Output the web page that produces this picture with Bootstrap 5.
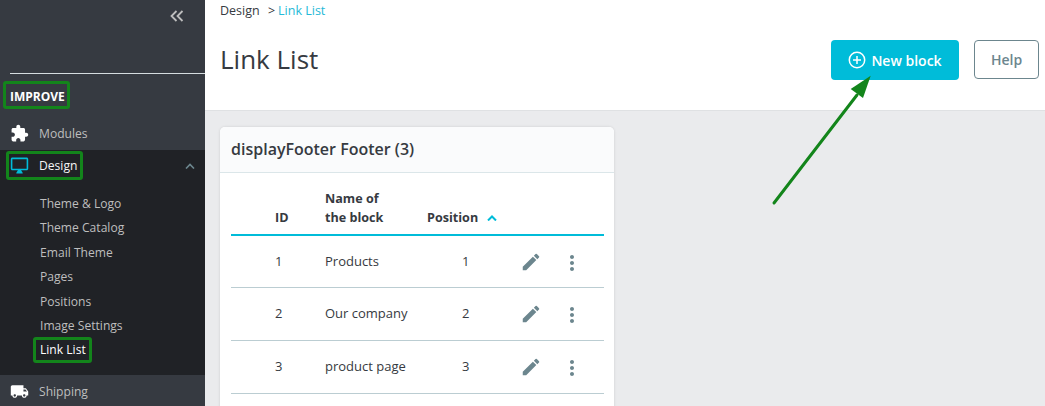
<!DOCTYPE html>
<html lang="en">
<head>
  <meta charset="UTF-8">
  <title>Link List</title>
  <link href="https://cdn.jsdelivr.net/npm/bootstrap@5.3.0/dist/css/bootstrap.min.css" rel="stylesheet">
  <style>
    html, body { height: 406px; overflow: hidden; }
    body { font-family: "Open Sans", sans-serif; font-size: 13px; color: #363a41; background: #eaebed; }
    .page-wrap { height: 406px; overflow: hidden; }

    /* sidebar */
    .side-bar { width: 205px; flex: none; background: #363a41; color: #bebebe; }
    .side-top { height: 74px; padding: 10px 21px 0 0; margin-left: 10px; border-bottom: 1px solid #d5dde0; }
    .side-title { height: 43px; padding: 14px 0 0 10px; color: #fff; font-size: 12px; font-weight: 700; line-height: 18px; }
    .side-item { height: 33px; padding: 2px 0 0 11px; font-size: 12.1px; }
    .side-ico { flex: none; width: 19px; height: 19px; margin: -2px 10px 0 -1px; }
    .side-chev { margin: -2px 10px 0 auto; }
    .side-active { background: #202226; height: 225px; }
    .side-active .side-item { height: 31px; color: #f5f5f5; }
    .side-sub { padding: 11px 0 0 40px; margin: 0; list-style: none; font-size: 12.1px; color: #bebebe; }
    .side-sub li { height: 24.4px; line-height: 24.4px; }
    .side-sub li.now { color: #fff; }
    .mark-green { position: absolute; border: 3px solid #13851b; border-radius: 3px; pointer-events: none; }
    .mark-improve { left: 3px; top: 81px; width: 67px; height: 28px; }
    .mark-design { left: 6px; top: 151px; width: 77px; height: 29px; }
    .mark-link { left: 33px; top: 337px; width: 59px; height: 26px; }

    /* header */
    .head-box { height: 111px; background: #fff; border-bottom: 1px solid #dfe1e3; padding: 0 6px 0 15px; }
    .crumbs { padding-top: 2px; font-size: 12.5px; line-height: 17px; color: #363a41; }
    .crumbs .sep { margin: 0 3px 0 5px; }
    .crumbs .cur { color: #25b9d7; }
    .head-row { margin-top: 21px; height: 40px; }
    .head-title { font-size: 26px; font-weight: 400; line-height: 38px; margin: 0; }
    .btn-new { background: #00bcd9; color: #fff; border: 0; border-radius: 4px; width: 128px; height: 40px; font-size: 14px; font-weight: 600; padding: 0; gap: 5px; }
    .btn-help { background: #fff; color: #6c868e; border: 1px solid #6c868e; border-radius: 4px; width: 65px; height: 39px; margin-left: 15px; font-size: 14px; font-weight: 600; padding: 0; }

    /* card */
    .body-box { padding: 16px 15px; }
    .blk-card { width: 394px; background: #fff; border: 0; border-radius: 5px; box-shadow: 0 0 3px rgba(0,0,0,.12); }
    .blk-head { height: 46px; padding: 0 11px; background: #fafbfc; border-bottom: 1px solid #dbe6e9; font-size: 16px; font-weight: 600; line-height: 44px; border-radius: 5px 5px 0 0; }
    .blk-body { padding: 0 10px 40px 11px; }
    .blk-table { width: 373px; table-layout: fixed; margin: 0; font-size: 13px; color: #363a41; }
    .blk-table th { padding: 0 0 7px; vertical-align: bottom; font-weight: 700; font-size: 12.6px; line-height: 19px; border-bottom: 2px solid #00bcd9; height: 62px; background: transparent; }
    .blk-table td { height: 52.7px; padding: 0; vertical-align: middle; border-bottom: 1px solid #bbcdd2; background: transparent; color: #363a41; }
    .col-id { padding-left: 44px !important; }
    .val-id { padding-left: 44px !important; }
    .val-pos { padding-left: 35px !important; }
    .sort-mark { margin-left: 9px; vertical-align: 1px; }
    .act-ico { display: block; fill: #6c868e; }
    .act-dots { margin-top: 2px; }

    .arrow-over { position: absolute; left: 770px; top: 70px; pointer-events: none; }
  </style>
</head>
<body>
  <div class="page-wrap d-flex position-relative">
    <div class="side-bar">
      <div class="side-top d-flex justify-content-end">
        <svg width="14" height="12" viewBox="0 0 14 12" fill="none" stroke="#bebebe" stroke-width="1.8"><polyline points="6.5,1 1.5,6 6.5,11"/><polyline points="12.5,1 7.5,6 12.5,11"/></svg>
      </div>
      <div class="side-title">IMPROVE</div>
      <div class="side-item d-flex align-items-center">
        <svg class="side-ico" viewBox="0 0 24 24" fill="#fff"><path d="M20.5 11H19V7c0-1.1-.9-2-2-2h-4V3.5C13 2.12 11.88 1 10.5 1S8 2.12 8 3.5V5H4c-1.1 0-1.99.9-1.99 2v3.8H3.5c1.49 0 2.7 1.21 2.7 2.7s-1.21 2.7-2.7 2.7H2V20c0 1.1.9 2 2 2h3.8v-1.5c0-1.49 1.21-2.7 2.7-2.7 1.49 0 2.7 1.21 2.7 2.7V22H17c1.1 0 2-.9 2-2v-4h1.5c1.38 0 2.5-1.12 2.5-2.5S21.88 11 20.5 11z"/></svg>
        <span>Modules</span>
      </div>
      <div class="side-active">
        <div class="side-item d-flex align-items-center">
          <svg class="side-ico" viewBox="0 0 24 24" fill="#00bcd9"><path d="M21 2H3c-1.1 0-2 .9-2 2v12c0 1.1.9 2 2 2h7l-2 3v1h8v-1l-2-3h7c1.1 0 2-.9 2-2V4c0-1.1-.9-2-2-2zm0 14H3V4h18v12z"/></svg>
          <span>Design</span>
          <svg class="side-chev" width="10" height="6" viewBox="0 0 10 6" fill="none" stroke="#6c868e" stroke-width="1.6"><polyline points="1,5.500 5,1.500 9,5.500"/></svg>
        </div>
        <ul class="side-sub">
          <li>Theme &amp; Logo</li>
          <li>Theme Catalog</li>
          <li>Email Theme</li>
          <li>Pages</li>
          <li>Positions</li>
          <li>Image Settings</li>
          <li class="now">Link List</li>
        </ul>
      </div>
      <div class="side-item d-flex align-items-center">
        <svg class="side-ico" viewBox="0 0 24 24" fill="#fff"><path d="M20 8h-3V4H3c-1.1 0-2 .9-2 2v11h2c0 1.66 1.34 3 3 3s3-1.34 3-3h6c0 1.66 1.34 3 3 3s3-1.34 3-3h2v-5l-3-4zM6 18.500c-.83 0-1.500-.67-1.500-1.500s.67-1.500 1.500-1.500 1.500.67 1.500 1.500-.67 1.500-1.500 1.500zm13.500-9l1.960 2.500H17V9.500h2.500zm-1.500 9c-.83 0-1.500-.67-1.500-1.500s.67-1.500 1.500-1.500 1.500.67 1.500 1.500-.67 1.500-1.500 1.500z"/></svg>
        <span>Shipping</span>
      </div>
    </div>

    <div class="flex-grow-1">
      <div class="head-box">
        <div class="crumbs">Design <span class="sep">&gt;</span><span class="cur">Link List</span></div>
        <div class="head-row d-flex align-items-start justify-content-between">
          <h1 class="head-title">Link List</h1>
          <div class="d-flex align-items-start">
            <button type="button" class="btn btn-new d-flex align-items-center justify-content-center">
              <svg width="18" height="18" viewBox="0 0 18 18" fill="none" stroke="#fff" stroke-width="1.5"><circle cx="9" cy="9" r="7.7"/><path d="M9 5v8M5 9h8"/></svg>
              New block
            </button>
            <button type="button" class="btn btn-help">Help</button>
          </div>
        </div>
      </div>
      <div class="body-box">
        <div class="card blk-card">
          <div class="blk-head">displayFooter Footer (3)</div>
          <div class="blk-body">
            <table class="table blk-table">
              <colgroup><col style="width:94px"><col style="width:102px"><col style="width:93px"><col style="width:40px"><col></colgroup>
              <thead>
                <tr>
                  <th class="col-id">ID</th>
                  <th>Name of<br>the block</th>
                  <th class="text-nowrap">Position<svg class="sort-mark" width="10" height="6" viewBox="0 0 10 6" fill="none" stroke="#00bcd9" stroke-width="2"><polyline points="1,5.500 5,1.500 9,5.500"/></svg></th>
                  <th></th>
                  <th></th>
                </tr>
              </thead>
              <tbody>
                <tr>
                  <td class="val-id">1</td><td>Products</td><td class="val-pos">1</td>
                  <td><svg class="act-ico" width="22" height="22" viewBox="0 0 24 24"><path d="M3 17.25V21h3.750L17.810 9.940l-3.750-3.750L3 17.250zM20.710 7.040a.996.996 0 0 0 0-1.410l-2.340-2.340a.996.996 0 0 0-1.410 0l-1.830 1.830 3.750 3.750 1.830-1.830z"/></svg></td>
                  <td><svg class="act-ico act-dots" width="24" height="24" viewBox="0 0 24 24"><path d="M12 8c1.100 0 2-.9 2-2s-.9-2-2-2-2 .9-2 2 .9 2 2 2zm0 2c-1.100 0-2 .9-2 2s.9 2 2 2 2-.9 2-2-.9-2-2-2zm0 6c-1.100 0-2 .9-2 2s.9 2 2 2 2-.9 2-2-.9-2-2-2z"/></svg></td>
                </tr>
                <tr>
                  <td class="val-id">2</td><td>Our company</td><td class="val-pos">2</td>
                  <td><svg class="act-ico" width="22" height="22" viewBox="0 0 24 24"><path d="M3 17.25V21h3.750L17.810 9.940l-3.750-3.750L3 17.250zM20.710 7.040a.996.996 0 0 0 0-1.410l-2.340-2.340a.996.996 0 0 0-1.410 0l-1.830 1.830 3.750 3.750 1.830-1.830z"/></svg></td>
                  <td><svg class="act-ico act-dots" width="24" height="24" viewBox="0 0 24 24"><path d="M12 8c1.100 0 2-.9 2-2s-.9-2-2-2-2 .9-2 2 .9 2 2 2zm0 2c-1.100 0-2 .9-2 2s.9 2 2 2 2-.9 2-2-.9-2-2-2zm0 6c-1.100 0-2 .9-2 2s.9 2 2 2 2-.9 2-2-.9-2-2-2z"/></svg></td>
                </tr>
                <tr>
                  <td class="val-id">3</td><td>product page</td><td class="val-pos">3</td>
                  <td><svg class="act-ico" width="22" height="22" viewBox="0 0 24 24"><path d="M3 17.25V21h3.750L17.810 9.940l-3.750-3.750L3 17.250zM20.710 7.040a.996.996 0 0 0 0-1.410l-2.340-2.340a.996.996 0 0 0-1.410 0l-1.830 1.830 3.750 3.750 1.830-1.830z"/></svg></td>
                  <td><svg class="act-ico act-dots" width="24" height="24" viewBox="0 0 24 24"><path d="M12 8c1.100 0 2-.9 2-2s-.9-2-2-2-2 .9-2 2 .9 2 2 2zm0 2c-1.100 0-2 .9-2 2s.9 2 2 2 2-.9 2-2-.9-2-2-2zm0 6c-1.100 0-2 .9-2 2s.9 2 2 2 2-.9 2-2-.9-2-2-2z"/></svg></td>
                </tr>
              </tbody>
            </table>
          </div>
        </div>
      </div>
    </div>

    <!-- green annotations on top of the screenshot -->
    <div class="mark-green mark-improve"></div>
    <div class="mark-green mark-design"></div>
    <div class="mark-green mark-link"></div>
    <svg class="arrow-over" width="110" height="140" viewBox="0 0 110 140">
      <line x1="4" y1="133" x2="87" y2="25" stroke="#13851b" stroke-width="3" stroke-linecap="round"/>
      <polygon points="100.700,5.700 80.700,19 93,28" fill="#13851b"/>
    </svg>
  </div>
  <script src="https://cdn.jsdelivr.net/npm/bootstrap@5.3.0/dist/js/bootstrap.bundle.min.js"></script>
</body>
</html>
